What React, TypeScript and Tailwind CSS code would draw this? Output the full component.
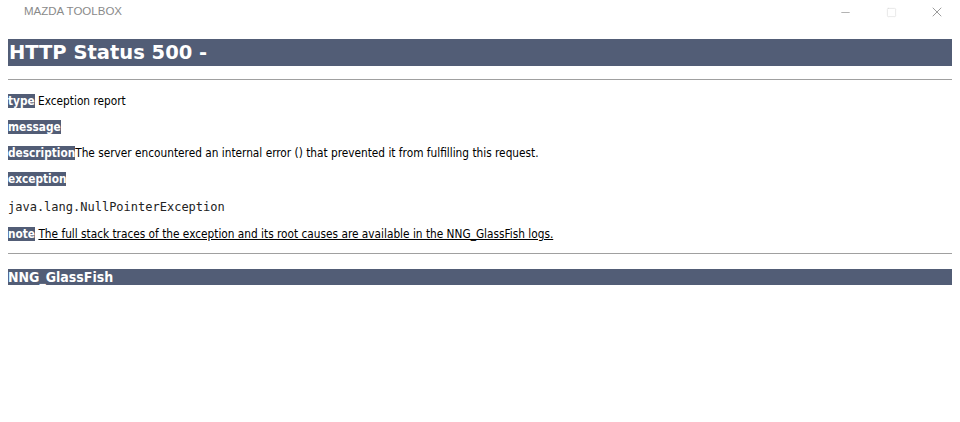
import { Minus, Square, X } from "lucide-react"

const Label = ({ children }: { children: string }) => (
    <b className="bg-[#525d76] text-white font-bold">{children}</b>
)

const App = () => {
    return (
        <div className="w-[960px] h-[422px] bg-white overflow-hidden font-['DejaVu_Sans_Condensed','DejaVu_Sans',Tahoma,sans-serif] text-black">
            {/* window title bar */}
            <div className="h-[24px] flex items-center justify-between">
                <span className="pl-6 text-[11.5px] text-[#8a8a8a] font-['Liberation_Sans',Arial,sans-serif]">MAZDA TOOLBOX</span>
                <div className="flex items-center h-full">
                    <button className="w-[46px] h-full flex items-center justify-center text-[#8a8a8a]">
                        <Minus size={13} strokeWidth={1.2} />
                    </button>
                    <button className="w-[46px] h-full flex items-center justify-center text-[#d6d6d6]">
                        <Square size={11} strokeWidth={1.2} />
                    </button>
                    <button className="w-[46px] h-full flex items-center justify-center text-[#777]">
                        <X size={16} strokeWidth={1.1} />
                    </button>
                </div>
            </div>

            <div className="px-2 pt-[15px]">
                <h1 className="bg-[#525d76] text-white font-bold text-[19.5px] leading-[27px] h-[27px] pl-px font-['DejaVu_Sans',Tahoma,sans-serif]">HTTP Status 500 - </h1>
                <hr className="mt-[13px] border-0 h-px bg-[#a0a0a0]" />
                <div className="text-[11.75px] leading-[14px]">
                    <p className="mt-[14px]"><Label>type</Label> Exception report</p>
                    <p className="mt-[12px]"><Label>message</Label></p>
                    <p className="mt-[12px]"><Label>description</Label>The server encountered an internal error () that prevented it from fulfilling this request.</p>
                    <p className="mt-[12px]"><Label>exception</Label></p>
                    <pre className="mt-[14px] font-['DejaVu_Sans_Mono',monospace] text-[12px] leading-[14px] text-[#222]">java.lang.NullPointerException</pre>
                    <p className="mt-[13px]"><Label>note</Label> <u>The full stack traces of the exception and its root causes are available in the NNG_GlassFish logs.</u></p>
                </div>
                <hr className="mt-[12px] border-0 h-px bg-[#a0a0a0]" />
                <h3 className="mt-[15px] bg-[#525d76] text-white font-bold text-[14px] leading-[16px] h-[16px]">NNG_GlassFish</h3>
            </div>
        </div>
    )
}

export default App
